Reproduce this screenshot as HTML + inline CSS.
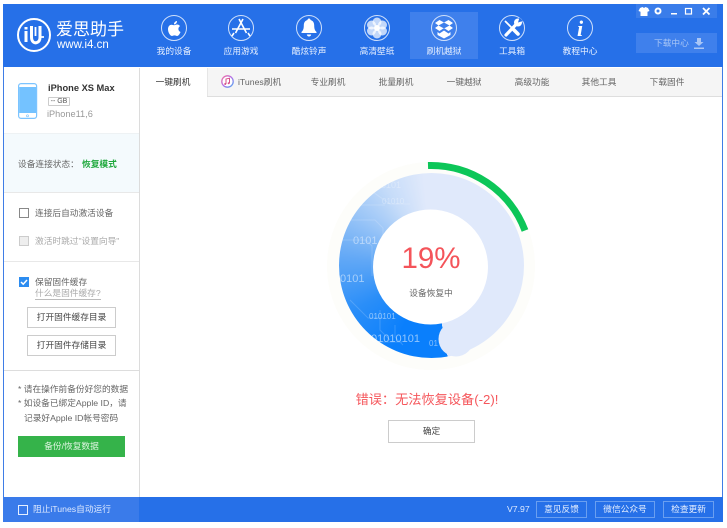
<!DOCTYPE html>
<html><head><meta charset="utf-8">
<style>
html,body{margin:0;padding:0;background:#fff;}
body{width:727px;height:528px;position:relative;overflow:hidden;font-family:"Liberation Sans","Noto Sans CJK SC",sans-serif;font-size:8.700px;color:#555;}
#w{position:absolute;left:0;top:0;width:727px;height:528px;filter:blur(.3px);}
.a{position:absolute;white-space:nowrap;}
.c{position:absolute;white-space:nowrap;transform:translateX(-50%);line-height:12px;}
.nav{color:#e6efff;top:45px;}
.tab{top:76px;color:#666;}
.line{position:absolute;left:4px;width:135px;height:1px;background:#e8e8e8;}
.btn{position:absolute;box-sizing:border-box;border:1px solid #ccc;background:#fff;text-align:center;color:#444;}
.bb{position:absolute;box-sizing:border-box;top:501px;height:17px;border:1px solid #6a9ff0;color:#e6efff;text-align:center;line-height:15px;}
</style></head><body><div id="w">
<!-- window frame -->
<div class="a" style="left:3px;top:4px;width:720px;height:518px;background:#fff;"></div>
<div class="a" style="left:3px;top:4px;width:1px;height:518px;background:#3f7de6;"></div>
<div class="a" style="left:722px;top:4px;width:1px;height:518px;background:#3f7de6;"></div>
<!-- header -->
<div class="a" style="left:3px;top:4px;width:720px;height:63px;background:#2670e8;"></div>
<div class="a" style="left:410px;top:12px;width:68px;height:47px;background:#3f80ec;"></div>
<div class="a" style="left:636px;top:4px;width:81px;height:14px;background:#3a7dea;"></div>
<div class="a" style="left:636px;top:33px;width:81px;height:20px;background:#3f80ec;"></div>
<svg class="a" style="left:0;top:0;" width="727" height="68" viewBox="0 0 727 68">
 <g fill="none" stroke="#fff">
  <circle cx="34" cy="35" r="16" stroke-width="2"/>
  <path d="M26 27v2.500M26 31v11" stroke-width="3"/>
  <path d="M31.500 26v11c0 5 3 6.500 5.500 5.500 2.500-1 3-3 3-5V26" stroke-width="3"/>
  <path d="M35.500 27v9M40 37h4" stroke-width="1.800"/>
  <g stroke="#cfe0fb" stroke-width="1">
   <circle cx="174" cy="28" r="12.500"/><circle cx="241" cy="28" r="12.500"/><circle cx="309" cy="28" r="12.500"/><circle cx="377" cy="28" r="12.500"/><circle cx="444" cy="28" r="12.500"/><circle cx="512" cy="28" r="12.500"/><circle cx="580" cy="28" r="12.500"/>
  </g>
 </g>
 <!-- apple -->
 <path fill="#fff" d="M177 21c.2 1.800-1.300 3.400-3 3.400-.2-1.700 1.400-3.300 3-3.400zM174 25.300c.8 0 1.800-.8 3.100-.8 1.100 0 2.200.6 2.900 1.600-2.400 1.500-2 4.800.5 5.900-.7 1.900-2.100 4-3.400 4-1 0-1.400-.6-2.600-.6-1.200 0-1.700.6-2.600.6-1.700 0-3.900-3.700-3.900-6.700 0-2.900 1.800-4.500 3.500-4.500 1.100 0 2 .5 2.500.5z"/>
 <!-- app store -->
 <path fill="none" stroke="#fff" stroke-width="1.600" d="M243 19l-7.500 14M239 19l7.500 14M232 29h18M234 33l-2 3M248 33l2 3"/>
 <!-- bell -->
 <path fill="#fff" d="M309 18.500c1 0 1.500.7 1.500 1.500 2.800.8 3.700 3 3.700 5.500 0 3.500.8 5 2.300 6.500v1h-15v-1c1.500-1.500 2.300-3 2.300-6.500 0-2.500.9-4.700 3.700-5.500 0-.8.500-1.500 1.500-1.500zM306.800 34.500h4.400c-.2 1.300-1.100 2-2.200 2s-2-.7-2.200-2z"/>
 <!-- flower -->
 <g fill="#fff" fill-opacity=".72">
  <circle cx="377" cy="22" r="4.500"/><circle cx="377" cy="34" r="4.500"/><circle cx="371.500" cy="25" r="4.500"/><circle cx="382.500" cy="25" r="4.500"/><circle cx="371.500" cy="31" r="4.500"/><circle cx="382.500" cy="31" r="4.500"/>
 </g>
 <circle cx="377" cy="28" r="3" fill="#fff"/>
 <!-- dropbox box -->
 <path fill="#fff" d="M435 23l4.500-3 4.500 2.500 4.500-2.500 4.500 3-3.500 2.500 3.500 2.500-4.500 3-4.500-3-4.500 3-4.500-3 3.500-2.500zM438.500 25.500l5.500 3 5.500-3-5.500-3zM437.500 32l2 1.500 4.500-3 4.500 3 2-1.500v3l-6.500 3.500-6.500-3.500z"/>
 <!-- tools -->
 <g fill="none" stroke="#fff" stroke-linecap="round">
  <path stroke-width="3.200" d="M506 35l10-10.500"/>
  <path stroke-width="1.800" d="M505.500 21.500l6.500 6.500"/>
  <path stroke-width="3.600" d="M513 29l5 5"/>
 </g>
 <circle cx="518" cy="22.500" r="4" fill="#fff"/>
 <path fill="#2670e8" d="M518 22.500l1.500-5 3.500 3.500z"/>
 <!-- i -->
 <text x="580" y="36" font-family="Liberation Serif" font-style="italic" font-weight="700" font-size="22" fill="#fff" text-anchor="middle">i</text>
 <!-- window controls -->
 <path fill="#fff" d="M640 8l2.500-1 1.500 1 1.500-1 2.500 1 1.500 3-2 .8V16h-7v-4.200l-2-.8z"/>
 <circle cx="658" cy="11" r="2.500" fill="none" stroke="#fff" stroke-width="2"/>
 <path fill="#fff" d="M671 13h6v1.500h-6z"/>
 <rect x="685.500" y="8.500" width="6" height="5.500" fill="none" stroke="#fff" stroke-width="1.200"/>
 <path stroke="#fff" stroke-width="1.800" d="M703 8l6.500 6.500M709.500 8L703 14.500"/>
 <path fill="#a9c6f6" d="M697 38h4v4h2.500l-4.500 4-4.500-4H697zM694 47.500h10v1.500h-10z"/>
</svg>
<div class="a" style="left:56px;top:20px;font-size:17px;line-height:20px;color:#fff;">爱思助手</div>
<div class="a" style="left:57px;top:38px;font-size:11.500px;line-height:14px;color:#fff;">www.i4.cn</div>
<div class="c nav" style="left:174px;">我的设备</div>
<div class="c nav" style="left:241px;">应用游戏</div>
<div class="c nav" style="left:309px;">酷炫铃声</div>
<div class="c nav" style="left:377px;">高清壁纸</div>
<div class="c nav" style="left:444px;">刷机越狱</div>
<div class="c nav" style="left:512px;">工具箱</div>
<div class="c nav" style="left:580px;">教程中心</div>
<div class="a" style="left:654px;top:37px;color:#a9c6f6;line-height:12px;">下载中心</div>

<!-- tabs -->
<div class="a" style="left:207px;top:68px;width:515px;height:28px;background:#f5f5f5;"></div>
<div class="a" style="left:207px;top:96px;width:515px;height:1px;background:#dedede;"></div>
<div class="a" style="left:207px;top:68px;width:1px;height:28px;background:#e6e6e6;"></div>
<div class="c tab" style="left:173px;color:#333;">一键刷机</div>
<svg class="a" style="left:221px;top:75px;" width="13" height="13" viewBox="0 0 13 13">
 <defs><linearGradient id="it" x1="0" y1="0" x2="1" y2="1"><stop offset="0" stop-color="#f56ea0"/><stop offset=".5" stop-color="#b070e8"/><stop offset="1" stop-color="#50a8f0"/></linearGradient></defs>
 <circle cx="6.500" cy="6.500" r="5.700" fill="#fff" stroke="url(#it)" stroke-width="1.300"/>
 <path fill="none" stroke="#d8508a" stroke-width="1" d="M5 9V4l3.500-.8V8"/><circle cx="4.200" cy="9" r="1" fill="#d8508a"/><circle cx="7.700" cy="8.200" r="1" fill="#d8508a"/>
</svg>
<div class="a tab" style="left:238px;line-height:12px;">iTunes刷机</div>
<div class="c tab" style="left:328px;">专业刷机</div>
<div class="c tab" style="left:396px;">批量刷机</div>
<div class="c tab" style="left:464px;">一键越狱</div>
<div class="c tab" style="left:532px;">高级功能</div>
<div class="c tab" style="left:599px;">其他工具</div>
<div class="c tab" style="left:667px;">下载固件</div>

<!-- sidebar -->
<div class="a" style="left:139px;top:68px;width:1px;height:429px;background:#dcdcdc;"></div>
<svg class="a" style="left:18px;top:83px;" width="21" height="37" viewBox="0 0 21 37">
 <rect x=".6" y=".6" width="18" height="34.800" rx="2.500" fill="#fff" stroke="#7cc4ff" stroke-width="1.200"/>
 <rect x="1.200" y="4" width="16.800" height="26" fill="#74c2ff"/>
 <circle cx="9.500" cy="32.800" r="1" fill="none" stroke="#7cc4ff" stroke-width=".7"/>
</svg>
<div class="a" style="left:48px;top:82px;font-size:9.300px;line-height:13px;font-weight:700;color:#333;">iPhone XS Max</div>
<div class="a" style="left:48px;top:97px;width:22px;height:9px;box-sizing:border-box;border:1px solid #ccc;border-radius:1px;font-size:7px;line-height:7px;text-align:center;color:#555;">-- GB</div>
<div class="a" style="left:47px;top:108px;line-height:12px;color:#999;font-size:9.200px;">iPhone11,6</div>
<div class="a" style="left:4px;top:133px;width:135px;height:59px;background:#f4fafd;"></div>
<div class="line" style="top:133px;background:#eef2f4;"></div>
<div class="line" style="top:192px;"></div>
<div class="a" style="left:18px;top:158px;line-height:12px;color:#666;">设备连接状态：</div>
<div class="a" style="left:82px;top:158px;line-height:12px;color:#1ea83c;font-weight:700;">恢复模式</div>

<div class="a" style="left:19px;top:208px;width:10px;height:10px;box-sizing:border-box;border:1px solid #888;background:#fff;"></div>
<div class="a" style="left:35px;top:207px;line-height:12px;color:#666;">连接后自动激活设备</div>
<div class="a" style="left:19px;top:236px;width:10px;height:10px;box-sizing:border-box;border:1px solid #ccc;background:#eee;"></div>
<div class="a" style="left:35px;top:235px;line-height:12px;color:#aaa;">激活时跳过"设置向导"</div>
<div class="line" style="top:261px;"></div>

<div class="a" style="left:19px;top:277px;width:10px;height:10px;background:#2c8cf0;"></div>
<svg class="a" style="left:19px;top:277px;" width="10" height="10"><path d="M2 5l2.200 2.200L8 3" fill="none" stroke="#fff" stroke-width="1.500"/></svg>
<div class="a" style="left:35px;top:276px;line-height:12px;color:#666;">保留固件缓存</div>
<div class="a" style="left:35px;top:288px;line-height:11px;color:#aaa;border-bottom:1px solid #bbb;">什么是固件缓存?</div>
<div class="btn" style="left:27px;top:307px;width:89px;height:21px;line-height:19px;">打开固件缓存目录</div>
<div class="btn" style="left:27px;top:335px;width:89px;height:21px;line-height:19px;">打开固件存储目录</div>
<div class="line" style="top:370px;background:#ddd;"></div>
<div class="a" style="left:18px;top:383px;line-height:12px;color:#666;">* 请在操作前备份好您的数据</div>
<div class="a" style="left:18px;top:397px;line-height:12px;color:#666;">* 如设备已绑定Apple ID，请</div>
<div class="a" style="left:24px;top:412px;line-height:12px;color:#666;">记录好Apple ID帐号密码</div>
<div class="a" style="left:18px;top:436px;width:107px;height:21px;background:#35b34a;color:#dff5e2;text-align:center;line-height:21px;">备份/恢复数据</div>

<!-- ring -->
<svg class="a" style="left:320px;top:150px;" width="220" height="220" viewBox="320 150 220 220">
 <circle cx="431" cy="266" r="98" fill="none" stroke="#fdfdfa" stroke-width="12"/>
</svg>
<div class="a" style="left:338.500px;top:173px;width:185px;height:185px;border-radius:50%;background:conic-gradient(from 0deg,#e0e9fb 0deg,#e0e9fb 170deg,#0a7ffc 170deg,#0a7ffc 205deg,#2a8ef8 240deg,#62a8f6 275deg,#9cc6f7 305deg,#c6dcf9 330deg,#e0e9fb 355deg);"></div>
<svg class="a" style="left:320px;top:150px;" width="220" height="220" viewBox="320 150 220 220">
 <g fill="none" stroke="#fff" stroke-opacity=".16" stroke-width="1">
  <path d="M345 220h30l8 8v10M342 240h24l6 6v30M350 300l18 18h16M360 330l12 12h30M370 190l20 14h20M355 205h30M380 310v20l10 10M395 325v12l8 8"/>
 </g>
 <g fill="#fff" font-family="Liberation Sans">
  <text x="353" y="244" font-size="11" fill-opacity=".45">0101</text>
  <text x="340" y="282" font-size="11" fill-opacity=".5">0101</text>
  <text x="369" y="319" font-size="8" fill-opacity=".5">010101</text>
  <text x="371" y="342" font-size="11" fill-opacity=".55">01010101</text>
  <text x="429" y="346" font-size="8" fill-opacity=".5">01</text>
  <text x="381" y="188" font-size="9" fill-opacity=".3">0101</text>
  <text x="382" y="204" font-size="8" fill-opacity=".3">01010</text>
 </g>
 <circle cx="430.500" cy="267" r="57.500" fill="#fff"/>
 <circle cx="456" cy="339" r="17.500" fill="#e0e9fb"/>
 <path fill="none" stroke="#0cc658" stroke-width="7" d="M428 165.500A100.500 100.500 0 0 1 525 230.500"/>
</svg>
<div class="a" style="left:381px;top:241px;width:100px;text-align:center;font-size:29.500px;line-height:36px;color:#f4545a;">19%</div>
<div class="c" style="left:431px;top:287px;color:#666;">设备恢复中</div>
<div class="c" style="left:427px;top:392px;font-size:13.200px;line-height:16px;color:#f5575c;">错误：无法恢复设备(-2)!</div>
<div class="btn" style="left:388px;top:420px;width:87px;height:23px;line-height:21px;">确定</div>

<!-- bottom -->
<div class="a" style="left:3px;top:497px;width:720px;height:25px;background:#2670e8;"></div>
<div class="a" style="left:3px;top:497px;width:136px;height:25px;background:#3a7bea;"></div>
<div class="a" style="left:18px;top:505px;width:10px;height:10px;box-sizing:border-box;border:1px solid #e6efff;"></div>
<div class="a" style="left:33px;top:503px;line-height:12px;color:#dfeaff;">阻止iTunes自动运行</div>
<div class="a" style="left:507px;top:503px;line-height:12px;color:#dfeaff;">V7.97</div>
<div class="bb" style="left:536px;width:51px;">意见反馈</div>
<div class="bb" style="left:595px;width:60px;">微信公众号</div>
<div class="bb" style="left:663px;width:51px;">检查更新</div>
</div></body></html>
